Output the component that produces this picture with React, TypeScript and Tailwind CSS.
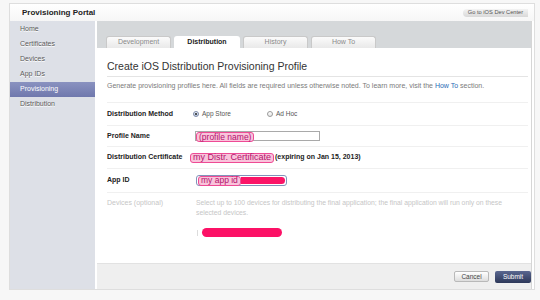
export default function App() {
  const pink =
    "inline-flex items-center leading-none text-[#b3126c] bg-[#f9c3db] border border-[#ee4b95] rounded-[3px] px-[2px] h-[10px] whitespace-nowrap";
  return (
    <div className="w-[540px] h-[300px] bg-[#f7f7f7] pt-[3px] pl-[9px] overflow-hidden font-['Liberation_Sans',Arial,sans-serif]">
      <div className="w-[526px] h-[287px] bg-white border border-[#dedede] flex flex-col">
        {/* header */}
        <div className="h-[17px] flex items-center justify-between pl-[12px] pr-[6px] bg-gradient-to-b from-white to-[#f6f6f6]">
          <span className="text-[8px] font-bold text-[#222]">Provisioning Portal</span>
          <span className="h-[8px] w-[65px] flex items-center justify-center rounded-l-[4px] bg-gradient-to-b from-[#f3f3f3] to-[#d9d9d9] text-[5.7px] text-[#555] leading-none">
            Go to iOS Dev Center
          </span>
        </div>
        {/* body */}
        <div className="flex flex-1">
          {/* sidebar */}
          <div className="w-[85px] bg-[#dde0e7] flex flex-col pt-[1px] text-[7px] text-[#5a5a5a]">
            {["Home", "Certificates", "Devices", "App IDs", "Provisioning", "Distribution"].map((s) =>
              s === "Provisioning" ? (
                <div
                  key={s}
                  className="h-[15px] flex items-center pl-[10px] bg-gradient-to-b from-[#8a92c0] to-[#6f78ad] text-white"
                >
                  {s}
                </div>
              ) : (
                <div key={s} className="h-[15px] flex items-center pl-[10px] [text-shadow:0_1px_0_#fff]">
                  {s}
                </div>
              )
            )}
          </div>
          {/* main */}
          <div className="flex-1 ml-[2px] mr-[2px] flex flex-col border-r border-[#d6d6d6]">
            <div className="h-[27px] bg-[#d5d8da] flex items-end pl-[9px] gap-[3px]">
              {["Development", "Distribution", "History", "How To"].map((t) =>
                t === "Distribution" ? (
                  <div
                    key={t}
                    className="w-[66px] h-[12px] bg-white rounded-t-[3px] flex items-center justify-center text-[7px] font-bold text-[#222]"
                  >
                    {t}
                  </div>
                ) : (
                  <div
                    key={t}
                    className="w-[65px] h-[12px] bg-gradient-to-b from-[#fbfbfb] to-[#e9e9e9] border border-b-0 border-[#c9c9c9] rounded-t-[3px] flex items-center justify-center text-[7px] text-[#8a8a8a]"
                  >
                    {t}
                  </div>
                )
              )}
            </div>
            {/* content */}
            <div className="flex-1 bg-white pl-[10px] pr-[3px] flex flex-col">
              <div className="pt-[12px] h-[29px] leading-[13px] text-[10.5px] text-[#333] border-b border-[#e4e4e4]">
                Create iOS Distribution Provisioning Profile
              </div>
              <div className="mt-[4px] leading-[9px] text-[7px] text-[#7a7a7a] h-[21px] whitespace-nowrap">
                Generate provisioning profiles here. All fields are required unless otherwise noted. To learn more,
                visit the <span className="text-[#2a6bb5]">How To</span> section.
              </div>
              {/* Distribution method */}
              <div className="h-[23px] border-t border-[#f0f0f0] flex items-center">
                <div className="w-[86px] text-[7px] font-bold text-[#222]">Distribution Method</div>
                <div className="w-[74px] flex items-center">
                  <span className="w-[6px] h-[6px] rounded-full border border-[#7d8aa8] bg-gradient-to-b from-[#eef3fb] to-[#bfcde4] flex items-center justify-center">
                    <span className="w-[2.5px] h-[2.5px] rounded-full bg-[#222]" />
                  </span>
                  <span className="ml-[3px] text-[6.5px] text-[#555]">App Store</span>
                </div>
                <div className="flex items-center">
                  <span className="w-[6px] h-[6px] rounded-full border border-[#9a9a9a] bg-gradient-to-b from-white to-[#e6e6e6]" />
                  <span className="ml-[3px] text-[6.5px] text-[#555]">Ad Hoc</span>
                </div>
              </div>
              {/* Profile name */}
              <div className="h-[21px] border-t border-[#f0f0f0] flex items-center">
                <div className="w-[86px] text-[7px] font-bold text-[#222]">Profile Name</div>
                <div className="ml-[2px] w-[125px] h-[10px] border border-[#a9a9a9] bg-white relative">
                  <span className={pink + " absolute left-0 top-[0px] text-[8.5px]"}>(profile name)</span>
                </div>
              </div>
              {/* Distribution certificate */}
              <div className="h-[22px] border-t border-[#f0f0f0] flex items-center">
                <div className="w-[86px] text-[7px] font-bold text-[#222] whitespace-nowrap">Distribution Certificate</div>
                <span className={pink + " ml-[-3px] text-[9px]"}>my Distr. Certificate</span>
                <span className="ml-[1px] text-[7px] font-bold text-[#222] whitespace-nowrap">
                  (expiring on Jan 15, 2013)
                </span>
              </div>
              {/* App ID */}
              <div className="h-[24px] border-t border-[#f0f0f0] flex items-center">
                <div className="w-[86px] text-[7px] font-bold text-[#222]">App ID</div>
                <div className="ml-[3px] w-[91px] h-[11px] border-[1.5px] border-[#8292ba] rounded-[3px] flex items-center px-[1px] bg-white">
                  <span className={pink + " text-[8.5px] h-[9px]"}>my app id</span>
                  <span className="flex-1 h-[7px] bg-[#fb1467] rounded-r-[4px]" />
                </div>
              </div>
              {/* Devices */}
              <div className="border-t border-[#f0f0f0] pt-[5px] flex">
                <div className="w-[89px] text-[7px] text-[#c6c6c6] leading-[10px]">Devices (optional)</div>
                <div className="flex-1 text-[6.8px] text-[#c6c6c6] leading-[10px] pr-[2px]">
                  Select up to 100 devices for distributing the final application; the final application will run only on
                  these selected devices.
                </div>
              </div>
              <div className="mt-[10px] ml-[90px] flex items-center">
                <span className="w-[4px] h-[6px] border-l border-[#dcdcdc]" />
                <span className="ml-[1px] w-[80px] h-[9px] rounded-full bg-[#fc1166]" />
              </div>
            </div>
            {/* footer */}
            <div className="h-[26px] bg-[#efefef] border-t border-[#e2e2e2] flex items-center justify-end gap-[6px]">
              <span className="w-[35px] h-[11px] border border-[#b9b9b9] rounded-[2px] bg-gradient-to-b from-white to-[#dedede] flex items-center justify-center text-[6.5px] text-[#444]">
                Cancel
              </span>
              <span className="w-[36px] h-[12px] rounded-[2px] bg-gradient-to-b from-[#5a6790] to-[#2d3859] flex items-center justify-center text-[6.5px] text-white">
                Submit
              </span>
            </div>
          </div>
        </div>
      </div>
    </div>
  );
}
